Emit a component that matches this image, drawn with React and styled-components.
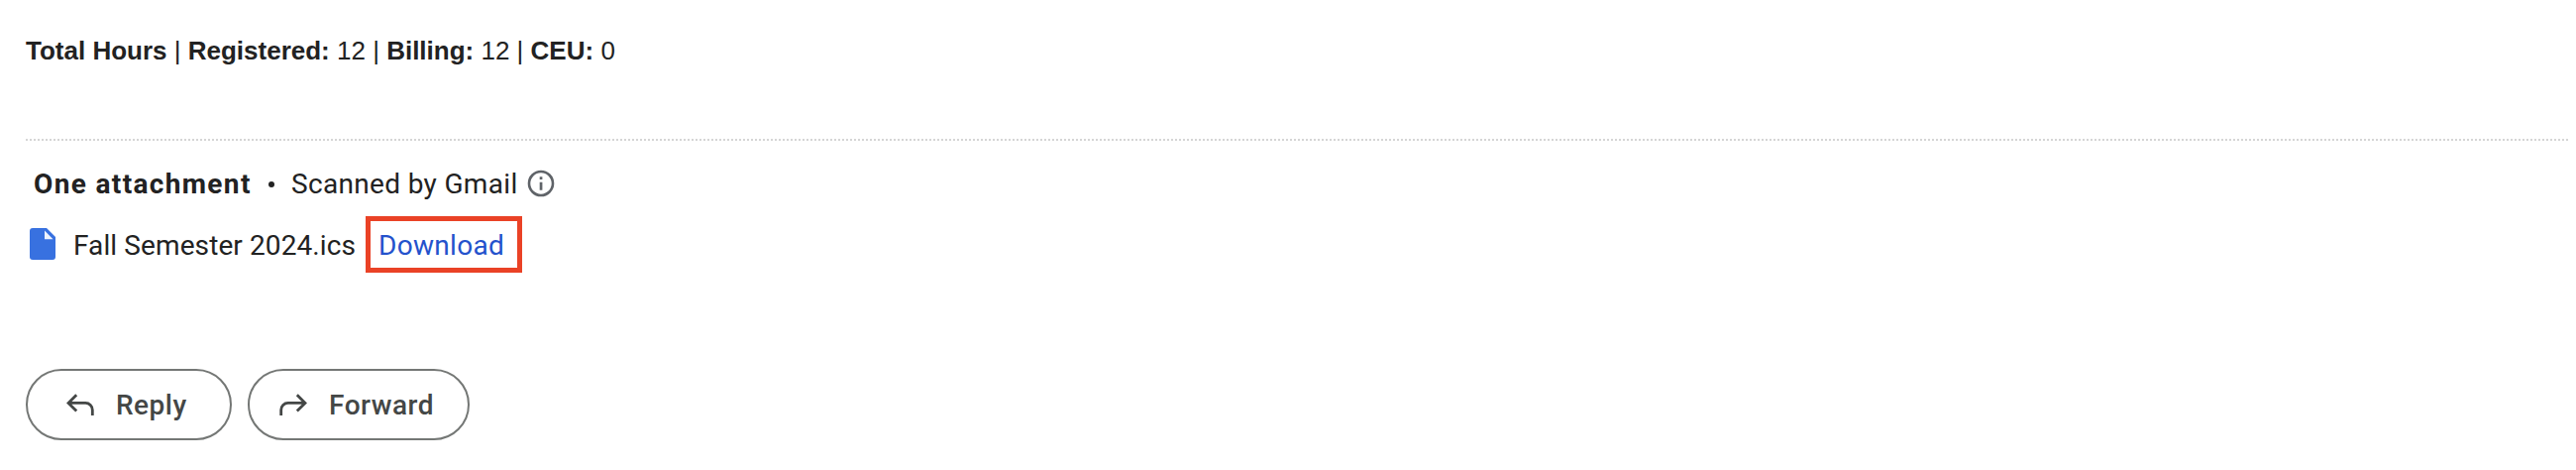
import React from "react";
import styled, { createGlobalStyle } from "styled-components";

const GlobalStyle = createGlobalStyle`
  * { box-sizing: border-box; }
  body { margin: 0; background: #fff; }
`;

const Message = styled.main`
  display: flex;
  flex-direction: column;
  height: 474px;
  padding: 36px 6px 0 26px;
  color: #222;
  font-family: Roboto, "Liberation Sans", sans-serif;
  font-size: 28px;
  white-space: nowrap;
`;

const Totals = styled.p`
  margin: 0;
  height: 104px;
  font: 26px/30px "Liberation Sans", Arial, sans-serif;
`;

const Divider = styled.hr`
  width: 100%;
  margin: 0;
  border: 0;
  height: 2px;
  background: repeating-linear-gradient(to right, #d5d5d5 0 2px, transparent 2px 4px);
`;

const Summary = styled.div`
  display: flex;
  align-items: center;
  height: 40px;
  margin-top: 23px;
  padding-left: 8px;
`;

const Text = styled.span`
  font-weight: ${(p) => p.$weight || "inherit"};
  letter-spacing: ${(p) => p.$spacing || 0}px;
  width: ${(p) => (p.$width ? `${p.$width}px` : "auto")};
  flex: none;
`;

const Bullet = styled.i`
  width: 6px;
  height: 6px;
  margin: 2px 17px 0 18px;
  border-radius: 50%;
  background: #222;
`;

const InfoIcon = styled.svg`
  width: 28px;
  height: 28px;
  margin-left: 8px;
`;

const Attachment = styled.div`
  display: flex;
  align-items: center;
  height: 57px;
  margin-top: 13px;
`;

const FileIcon = styled.svg`
  width: 26px;
  height: 32px;
  margin: 0 18px 0 4px;
  transform: translateY(-1px);
`;

const Download = styled.a`
  display: flex;
  align-items: center;
  width: 158px;
  height: 57px;
  margin-left: 9px;
  padding: 2px 0 0 8px;
  border: 5px solid #ea4226;
  color: #2452cc;
  text-decoration: none;
`;

const FileName = styled(Text)`
  padding-top: 2px;
`;

const Actions = styled.div`
  display: flex;
  gap: 16px;
  margin-top: 97px;
`;

const ActionButton = styled.button`
  display: flex;
  align-items: center;
  width: ${(p) => p.$width}px;
  height: 72px;
  padding: 0 0 0 ${(p) => p.$inset}px;
  border: 2px solid #747775;
  border-radius: 36px;
  background: #fff;
  color: #444746;
  font: 500 28px Roboto, sans-serif;
`;

const ArrowIcon = styled.svg`
  width: 28px;
  height: 24px;
  margin-right: 22px;
  flex: none;
  transform: ${(p) => (p.$flip ? "scaleX(-1)" : "none")};
`;

const Arrow = ({ flip }) => (
  <ArrowIcon $flip={flip} viewBox="0 0 28 24" fill="none" stroke="#444746" strokeWidth="2.8">
    <path d="M10.2 2.2 2 10.4l8.2 8.2M2 10.4h17.3a7 7 0 0 1 7 7V23" />
  </ArrowIcon>
);

export default function App() {
  return (
    <>
      <GlobalStyle />
      <Message>
        <Totals>
          <b>Total Hours</b> | <b>Registered:</b> 12 | <b>Billing:</b> 12 | <b>CEU:</b> 0
        </Totals>
        <Divider />
        <Summary>
          <Text $weight={700} $spacing={1.35} $width={219}>One attachment</Text>
          <Bullet />
          <Text $spacing={0.33} $width={230}>Scanned by Gmail</Text>
          <InfoIcon viewBox="0 0 28 28">
            <circle cx="14" cy="14" r="12" fill="none" stroke="#5f6368" strokeWidth="2.6" />
            <path d="M12.7 7.3h2.7V10h-2.7zM12.7 12.7h2.7v8h-2.7z" fill="#5f6368" />
          </InfoIcon>
        </Summary>
        <Attachment>
          <FileIcon viewBox="0 0 26 32">
            <path d="M3 0h14l9 9v20a3 3 0 0 1-3 3H3a3 3 0 0 1-3-3V3a3 3 0 0 1 3-3Z" fill="#3871e0" />
            <path d="M15 2.5v8.7h8.5Z" fill="#eef3fd" />
          </FileIcon>
          <FileName $spacing={0.1} $width={286}>Fall Semester 2024.ics</FileName>
          <Download href="#"><Text $spacing={0.3}>Download</Text></Download>
        </Attachment>
        <Actions>
          <ActionButton $width={208} $inset={39}>
            <Arrow /><Text $spacing={0.5}>Reply</Text>
          </ActionButton>
          <ActionButton $width={224} $inset={30}>
            <Arrow flip /><Text $spacing={0.5}>Forward</Text>
          </ActionButton>
        </Actions>
      </Message>
    </>
  );
}
